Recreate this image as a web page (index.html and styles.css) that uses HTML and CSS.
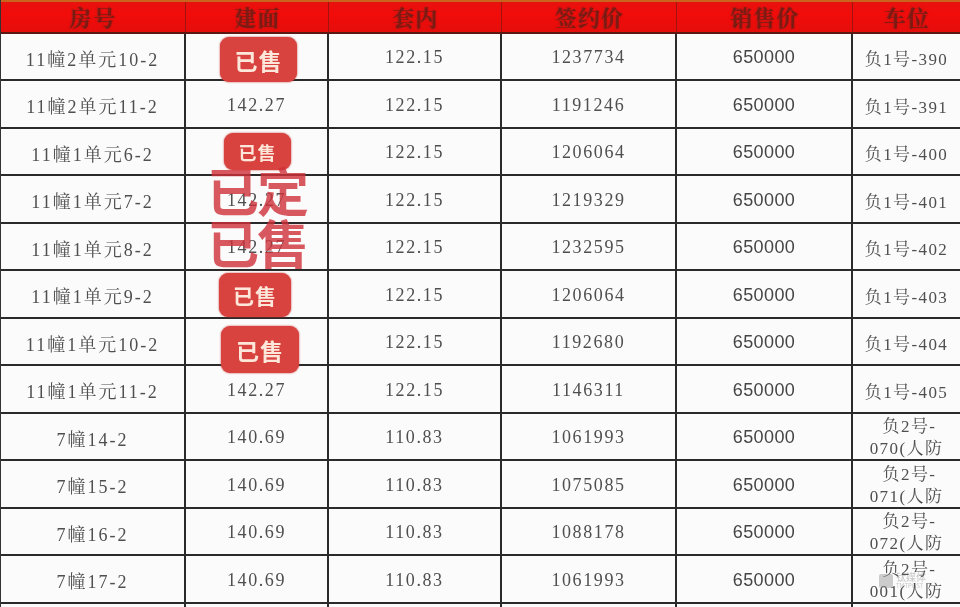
FILE: index.html
```html
<!DOCTYPE html>
<html lang="zh-CN">
<head>
<meta charset="utf-8">
<title>房号价格表</title>
<link rel="stylesheet" href="styles.css">
</head>
<body>
<div class="sheet">
  <div class="row head">
    <div class="c">房号</div><div class="c">建面</div><div class="c">套内</div><div class="c">签约价</div><div class="c">销售价</div><div class="c">车位</div>
  </div>
  <div class="row"><div class="c">11幢2单元10-2</div><div class="c">142.27</div><div class="c">122.15</div><div class="c">1237734</div><div class="c sans">650000</div><div class="c">负1号-390</div></div>
  <div class="row"><div class="c">11幢2单元11-2</div><div class="c">142.27</div><div class="c">122.15</div><div class="c">1191246</div><div class="c sans">650000</div><div class="c">负1号-391</div></div>
  <div class="row"><div class="c">11幢1单元6-2</div><div class="c">142.27</div><div class="c">122.15</div><div class="c">1206064</div><div class="c sans">650000</div><div class="c">负1号-400</div></div>
  <div class="row"><div class="c">11幢1单元7-2</div><div class="c">142.27</div><div class="c">122.15</div><div class="c">1219329</div><div class="c sans">650000</div><div class="c">负1号-401</div></div>
  <div class="row"><div class="c">11幢1单元8-2</div><div class="c">142.27</div><div class="c">122.15</div><div class="c">1232595</div><div class="c sans">650000</div><div class="c">负1号-402</div></div>
  <div class="row"><div class="c">11幢1单元9-2</div><div class="c">142.27</div><div class="c">122.15</div><div class="c">1206064</div><div class="c sans">650000</div><div class="c">负1号-403</div></div>
  <div class="row"><div class="c">11幢1单元10-2</div><div class="c">142.27</div><div class="c">122.15</div><div class="c">1192680</div><div class="c sans">650000</div><div class="c">负1号-404</div></div>
  <div class="row"><div class="c">11幢1单元11-2</div><div class="c">142.27</div><div class="c">122.15</div><div class="c">1146311</div><div class="c sans">650000</div><div class="c">负1号-405</div></div>
  <div class="row"><div class="c">7幢14-2</div><div class="c">140.69</div><div class="c">110.83</div><div class="c">1061993</div><div class="c sans">650000</div><div class="c two"><span>负2号-</span><span>070(人防</span></div></div>
  <div class="row"><div class="c">7幢15-2</div><div class="c">140.69</div><div class="c">110.83</div><div class="c">1075085</div><div class="c sans">650000</div><div class="c two"><span>负2号-</span><span>071(人防</span></div></div>
  <div class="row"><div class="c">7幢16-2</div><div class="c">140.69</div><div class="c">110.83</div><div class="c">1088178</div><div class="c sans">650000</div><div class="c two"><span>负2号-</span><span>072(人防</span></div></div>
  <div class="row"><div class="c">7幢17-2</div><div class="c">140.69</div><div class="c">110.83</div><div class="c">1061993</div><div class="c sans">650000</div><div class="c two"><span>负2号-</span><span>001(人防</span></div></div>
  <div class="row tail"><div class="c"></div><div class="c"></div><div class="c"></div><div class="c"></div><div class="c"></div><div class="c"></div></div>

  <div class="badge b1">已售</div>
  <div class="badge b3">已售</div>
  <div class="stamp"><span>已定</span><span>已售</span></div>
  <div class="badge b6">已售</div>
  <div class="badge b7">已售</div>
  <div class="mark"><span class="logo"></span><span class="mk">钛媒体<small>TMTPOST</small></span></div>
</div>
</body>
</html>
```

FILE: styles.css
```css
html, body {
  margin: 0;
  padding: 0;
  background: #fbfbfb;
}
.sheet {
  position: relative;
  width: 960px;
  height: 607px;
  overflow: hidden;
  border-left: 1px solid #333;
  box-sizing: border-box;
  font-family: "Liberation Serif", "Noto Serif CJK SC", "Noto Sans CJK SC", serif;
  color: #4f4f4f;
  filter: blur(0.3px);
}
.row {
  display: grid;
  grid-template-columns: 185px 143px 173px 175px 176px 107px;
  height: 47.5px;
  box-sizing: border-box;
  border-bottom: 2px solid #2a2a2a;
}
.c {
  display: flex;
  align-items: center;
  justify-content: center;
  padding-top: 3px;
  border-right: 2px solid #2a2a2a;
  font-size: 18px;
  letter-spacing: 1.6px;
  white-space: nowrap;
  overflow: hidden;
}
.row .c:first-child { letter-spacing: 2px; }
.row .c:last-child { border-right: none; letter-spacing: 1.4px; font-size: 17px; }
.sans {
  font-family: "Liberation Sans", "Noto Sans CJK SC", sans-serif;
  font-size: 18px;
  color: #454545;
  letter-spacing: 0.4px;
}
.row .two {
  flex-direction: column;
  font-size: 17px;
  line-height: 22px;
  padding-top: 4px;
  letter-spacing: 1.2px;
}
.two span:first-child { padding-left: 6px; }
.head {
  height: 33.5px;
  background: linear-gradient(#e8120e, #f20c0a 40%, #e40d0b);
  border-top: 2px solid #c8641e;
  border-bottom: 2px solid #5c1812;
}
.head .c {
  padding-top: 0;
  border-right: 1px solid #a01410;
  color: #7c1b14;
  font-weight: bold;
  font-size: 22px;
  letter-spacing: 1px;
  text-shadow: 0 0 2px #9a1e16;
}
.head .c:last-child { border-right: none; letter-spacing: 1px; font-size: 22px; }
.tail { border-bottom: none; }

.badge {
  position: absolute;
  display: flex;
  align-items: center;
  justify-content: center;
  background: #d9433f;
  border-radius: 9px;
  color: #fde6da;
  font-family: "Noto Sans CJK SC", sans-serif;
  font-weight: bold;
  letter-spacing: 1px;
  box-shadow: 0 0 2px #c03532;
}
.b1 { left: 219px; top: 37px; width: 77px; height: 45px; font-size: 23px; }
.b3 { left: 223px; top: 133px; width: 67px; height: 37px; font-size: 18px; }
.b6 { left: 218px; top: 273px; width: 72px; height: 44px; font-size: 21px; }
.b7 { left: 220px; top: 326px; width: 78px; height: 47px; font-size: 23px; }

.stamp {
  position: absolute;
  left: 206px;
  top: 164px;
  display: flex;
  flex-direction: column;
  font-family: "Noto Sans CJK SC", sans-serif;
  font-weight: bold;
  font-size: 52px;
  line-height: 52px;
  color: rgba(208, 48, 58, 0.8);
  letter-spacing: -2px;
}
.mark {
  position: absolute;
  left: 878px;
  top: 572px;
  display: flex;
  align-items: center;
  gap: 3px;
  opacity: 0.35;
}
.logo {
  width: 14px;
  height: 14px;
  background: #777;
  border-radius: 2px;
}
.mk {
  display: flex;
  flex-direction: column;
  font-family: "Noto Sans CJK SC", sans-serif;
  font-size: 10px;
  line-height: 10px;
  color: #666;
}
.mk small { font-size: 6px; line-height: 7px; }
```
